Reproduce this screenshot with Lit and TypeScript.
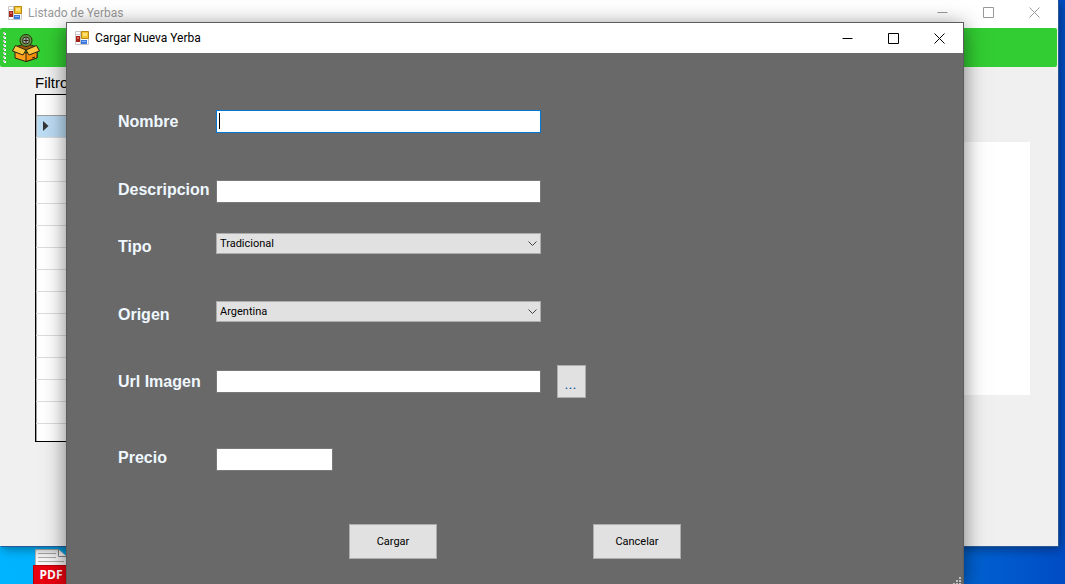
import { LitElement, html, css, svg } from "lit";
import { customElement, property } from "lit/decorators.js";

@customElement("window-bar")
class WindowBar extends LitElement {
  @property() heading = "";
  @property({ type: Boolean }) inactive = false;

  static styles = css`
    :host {
      display: block;
      background: #fff;
      color: #000;
      font: 12px/16px Roboto, "Noto Sans", sans-serif;
    }
    :host([inactive]) {
      color: #999;
    }
    .bar {
      display: flex;
      align-items: center;
      height: 100%;
      padding-left: 8px;
    }
    .logo {
      width: 16px;
      height: 16px;
      margin-right: 4px;
      flex: none;
    }
    .heading {
      flex: 1;
      margin: 0;
      font: inherit;
      font-weight: 400;
      white-space: nowrap;
    }
    .control {
      display: grid;
      place-items: center;
      width: 46px;
      height: 100%;
      padding: 0 1px 0 0;
      border: 0;
      background: none;
      color: inherit;
    }
    .glyph {
      width: 11px;
      height: 11px;
      fill: none;
      stroke: currentColor;
    }
  `;

  render() {
    const control = (label: string, shape: unknown) => html`
      <button class="control" type="button" aria-label=${label}>
        <svg class="glyph" viewBox="0 0 11 11">${shape}</svg>
      </button>`;
    return html`
      <div class="bar">
        <svg class="logo" viewBox="0 0 16 16" aria-hidden="true">
          <path d="M.5 1.500h13v13H.5z" fill="#fff" stroke="#c8c8c8" />
          <path d="M.5 4.500h13M5.500 1v13" stroke="#c8c8c8" />
          <path d="M1 6h4v6H1z" fill="#a3221b" />
          <path d="M2 7h2v2H2z" fill="#e0614e" />
          <path d="M6.500 1.500h7v7h-7z" fill="#f5c32c" stroke="#b98a14" />
          <path d="M8 3h4v3H8z" fill="#ffe07a" />
          <path d="M6 10h6v4H6z" fill="#3c78dc" />
          <path d="M7 11h4v1H7z" fill="#8ab6ff" />
        </svg>
        <h1 class="heading">${this.heading}</h1>
        ${control("Minimizar", svg`<path d="M.5 5.500h10" />`)}
        ${control("Maximizar", svg`<path d="M.5.5h10v10H.5z" />`)}
        ${control("Cerrar", svg`<path d="M.5.5l10 10M10.500.5l-10 10" />`)}
      </div>`;
  }
}

@customElement("product-list")
class ProductList extends LitElement {
  static styles = css`
    :host {
      display: flex;
      flex-direction: column;
      background: #f0f0f0;
      font: 15px/20px "Liberation Sans", Arial, sans-serif;
      color: #000;
    }
    window-bar {
      height: 25px;
      padding-bottom: 3px;
    }
    .tools {
      display: flex;
      align-items: center;
      gap: 6px;
      height: 39px;
      margin-right: 1px;
      padding-left: 2px;
      border-radius: 2px;
      background: #32cd32;
    }
    .grip {
      width: 4px;
      height: 31px;
      flex: none;
    }
    .add {
      display: grid;
      padding: 0;
      border: 0;
      background: none;
    }
    .box {
      width: 28px;
      height: 28px;
    }
    .content {
      display: flex;
      gap: 60px;
      padding: 6px 28px 0 35px;
    }
    .main {
      flex: 2;
    }
    .caption {
      display: block;
      margin-bottom: 1px;
    }
    .frame {
      height: 346px;
      overflow: hidden;
      border: 1px solid #000;
      background: #fff;
    }
    .grid {
      width: 100%;
      border-collapse: collapse;
      border-left: 1px solid #a0a0a0;
    }
    .grid th,
    .grid td {
      box-sizing: border-box;
      height: 22px;
      padding: 0 0 0 6px;
      border-bottom: 1px solid #dcdcdc;
      line-height: 0;
      text-align: left;
    }
    .grid th {
      height: 20px;
      border-bottom-color: #a0a0a0;
    }
    .grid .current {
      background: #bcdcf4;
    }
    .marker {
      width: 6px;
      height: 10px;
    }
    .preview {
      flex: 1;
      height: 253px;
      margin-top: 69px;
      background: #fff;
    }
  `;

  render() {
    return html`
      <window-bar heading="Listado de Yerbas" inactive></window-bar>
      <div class="tools">
        <svg class="grip" viewBox="0 0 4 31" aria-hidden="true">
          ${[0, 4, 8, 12, 16, 20, 24, 28].map(
            (y) => svg`<path d="M2 ${y + 1}h2v2H2z" fill="#fff" /><path d="M1 ${y}h2v2H1z" fill="#c8c8c8" />`
          )}
        </svg>
        <button class="add" type="button" aria-label="Agregar">
          <svg class="box" viewBox="0 0 28 28" stroke="#2a2410" stroke-linejoin="round">
            <path d="M3 16v8l11 3.500L25 24v-8l-11 3z" fill="#ffa01c" />
            <path d="M14 19v8.500L25 24v-8z" fill="#f58f0a" />
            <path d="M3 13l11-3.500L25 13l-11 4z" fill="#9c5a0c" />
            <circle cx="14" cy="6.500" r="6" fill="#5f9a42" />
            <circle cx="14" cy="6.500" r="3.500" fill="#a8aca8" />
            <path d="M14 4v5M11.500 6.500h5" fill="none" />
            <path d="M3.500 11.500L14 16l-3 5L.5 17z" fill="#ffc83c" />
            <path d="M24.500 11.500L14 16l3 5 10.500-4z" fill="#ffc83c" />
            <path d="M20 24l3-1" fill="none" />
          </svg>
        </button>
      </div>
      <div class="content">
        <div class="main">
          <span class="caption">Filtro</span>
          <div class="frame">
            <table class="grid">
              <thead><tr><th></th></tr></thead>
              <tbody>
                <tr>
                  <td class="current">
                    <svg class="marker" viewBox="0 0 6 10"><path d="M0 0l5.500 5L0 10z" fill="#333" /></svg>
                  </td>
                </tr>
                ${Array.from({ length: 14 }, () => html`<tr><td></td></tr>`)}
              </tbody>
            </table>
          </div>
        </div>
        <div class="preview"></div>
      </div>`;
  }
}

@customElement("product-dialog")
class ProductDialog extends LitElement {
  static styles = css`
    :host {
      display: block;
      overflow: hidden;
      background: #696969;
      font: 11px/14px Roboto, "Liberation Sans", sans-serif;
      color: #000;
    }
    window-bar {
      height: 30px;
    }
    .form {
      padding: 57px 50px 0;
    }
    .row {
      display: flex;
      align-items: flex-start;
      margin-bottom: 47px;
    }
    .row.near {
      margin-bottom: 30px;
    }
    .row.mid {
      margin-bottom: 44px;
    }
    .row.low {
      margin-bottom: 40px;
    }
    .row.wide {
      margin-bottom: 50px;
    }
    .row.last {
      margin-bottom: 53px;
    }
    .row.center {
      align-items: center;
    }
    .row.list {
      height: 24px;
    }
    .row.list .label {
      align-self: flex-end;
    }
    .label {
      box-sizing: border-box;
      width: 99px;
      padding-left: 1px;
      flex: none;
      color: #f0f8ff;
      font: bold 16px/20px "Liberation Sans", Arial, sans-serif;
      white-space: nowrap;
    }
    .field {
      position: relative;
      display: grid;
      width: 325px;
    }
    .field.short {
      width: 117px;
    }
    .box {
      box-sizing: border-box;
      width: 100%;
      height: 23px;
      margin: 0;
      padding: 0 3px;
      border: 1px solid #7a7a7a;
      border-radius: 0;
      outline: 0;
      background: #fff;
      font: inherit;
    }
    .box.active {
      border-color: #0078d7;
      caret-color: transparent;
    }
    .caret {
      position: absolute;
      left: 3px;
      top: 3px;
      width: 1px;
      height: 16px;
      background: #000;
    }
    .choice {
      grid-area: 1 / 1;
      box-sizing: border-box;
      width: 100%;
      height: 21px;
      margin: 0;
      padding: 0 24px 0 3px;
      border: 1px solid #adadad;
      border-radius: 0;
      appearance: none;
      background: #e1e1e1;
      color: #000;
      font: inherit;
    }
    .chevron {
      grid-area: 1 / 1;
      align-self: start;
      justify-self: end;
      width: 9px;
      height: 5px;
      margin: 8px 4px 0 0;
      z-index: 1;
      pointer-events: none;
    }
    .push {
      box-sizing: border-box;
      width: 88px;
      height: 35px;
      padding: 0;
      border: 1px solid #adadad;
      background: #e1e1e1;
      color: #000;
      font: inherit;
    }
    .push.browse {
      width: 29px;
      height: 33px;
      margin-left: 16px;
      padding: 4px 2px 0 0;
      color: #0a5a9c;
      font-size: 15px;
    }
    .actions {
      display: flex;
      justify-content: center;
      gap: 156px;
    }
    .sizer {
      position: absolute;
      right: 2px;
      bottom: 0;
      width: 8px;
      height: 7px;
      fill: #c0c0c0;
    }
  `;

  private select(id: string, value: string) {
    return html`
      <div class="field">
        <select class="choice" id=${id}><option>${value}</option></select>
        <svg class="chevron" viewBox="0 0 9 5" aria-hidden="true">
          <path d="M.5.5l4 4 4-4" fill="none" stroke="#444" />
        </svg>
      </div>`;
  }

  render() {
    return html`
      <window-bar heading="Cargar Nueva Yerba"></window-bar>
      <form class="form">
        <div class="row center">
          <label class="label" for="nombre">Nombre</label>
          <div class="field">
            <input class="box active" id="nombre" type="text" autocomplete="off" />
            <span class="caret"></span>
          </div>
        </div>
        <div class="row near">
          <label class="label" for="descripcion">Descripcion</label>
          <div class="field"><input class="box" id="descripcion" type="text" /></div>
        </div>
        <div class="row list mid">
          <label class="label" for="tipo">Tipo</label>
          ${this.select("tipo", "Tradicional")}
        </div>
        <div class="row list low">
          <label class="label" for="origen">Origen</label>
          ${this.select("origen", "Argentina")}
        </div>
        <div class="row center wide">
          <label class="label" for="url">Url Imagen</label>
          <div class="field"><input class="box" id="url" type="text" /></div>
          <button class="push browse" type="button" aria-label="Examinar">...</button>
        </div>
        <div class="row last">
          <label class="label" for="precio">Precio</label>
          <div class="field short"><input class="box" id="precio" type="text" /></div>
        </div>
        <div class="actions">
          <button class="push" type="button">Cargar</button>
          <button class="push" type="button">Cancelar</button>
        </div>
      </form>
      <svg class="sizer" viewBox="0 0 8 7" aria-hidden="true">
        <path d="M6 0h2v2H6zM3 3h2v2H3zM6 3h2v2H6zM0 6h2v1H0zM3 6h2v1H3zM6 6h2v1H6z" />
      </svg>`;
  }
}

@customElement("app-root")
class AppRoot extends LitElement {
  static styles = css`
    :host {
      display: block;
      position: relative;
      height: 100vh;
      overflow: hidden;
      background: linear-gradient(90deg, #00b4ff 0%, #00a0f4 40%, #0062d2 91%, #004cc4 100%);
    }
    product-list {
      position: absolute;
      inset: 0 7px 38px 0;
      box-shadow: 1px 1px 0 #2a5a96, 2px 3px 10px rgba(0, 0, 0, 0.4);
    }
    product-dialog {
      position: absolute;
      inset: 22px 101px 0 66px;
      border: 1px solid #5c5c5c;
      border-bottom: 0;
      box-shadow: 0 4px 20px rgba(0, 0, 0, 0.5);
    }
    .file {
      position: absolute;
      left: 33px;
      bottom: 0;
      width: 36px;
    }
    .sheet {
      display: block;
      width: 32px;
      height: 16px;
      margin: 0 auto;
    }
    .kind {
      display: block;
      background: #e8000f;
      border: 1px solid #b8000c;
      border-bottom: 0;
      color: #fff;
      font: bold 12px/18px "Open Sans", "Noto Sans", sans-serif;
      text-align: center;
    }
  `;

  render() {
    return html`
      <div class="file">
        <svg class="sheet" viewBox="0 0 32 16" aria-hidden="true">
          <path d="M.5 16V.5h23l8 7V16" fill="#f6f6f6" stroke="#b4b4b4" />
          <path d="M23.500.5v7h8" fill="#fff" stroke="#888" />
          <path d="M3 4.500h18M3 8.500h18M3 12.500h26" stroke="#aaa" />
        </svg>
        <span class="kind">PDF</span>
      </div>
      <product-list></product-list>
      <product-dialog></product-dialog>`;
  }
}
